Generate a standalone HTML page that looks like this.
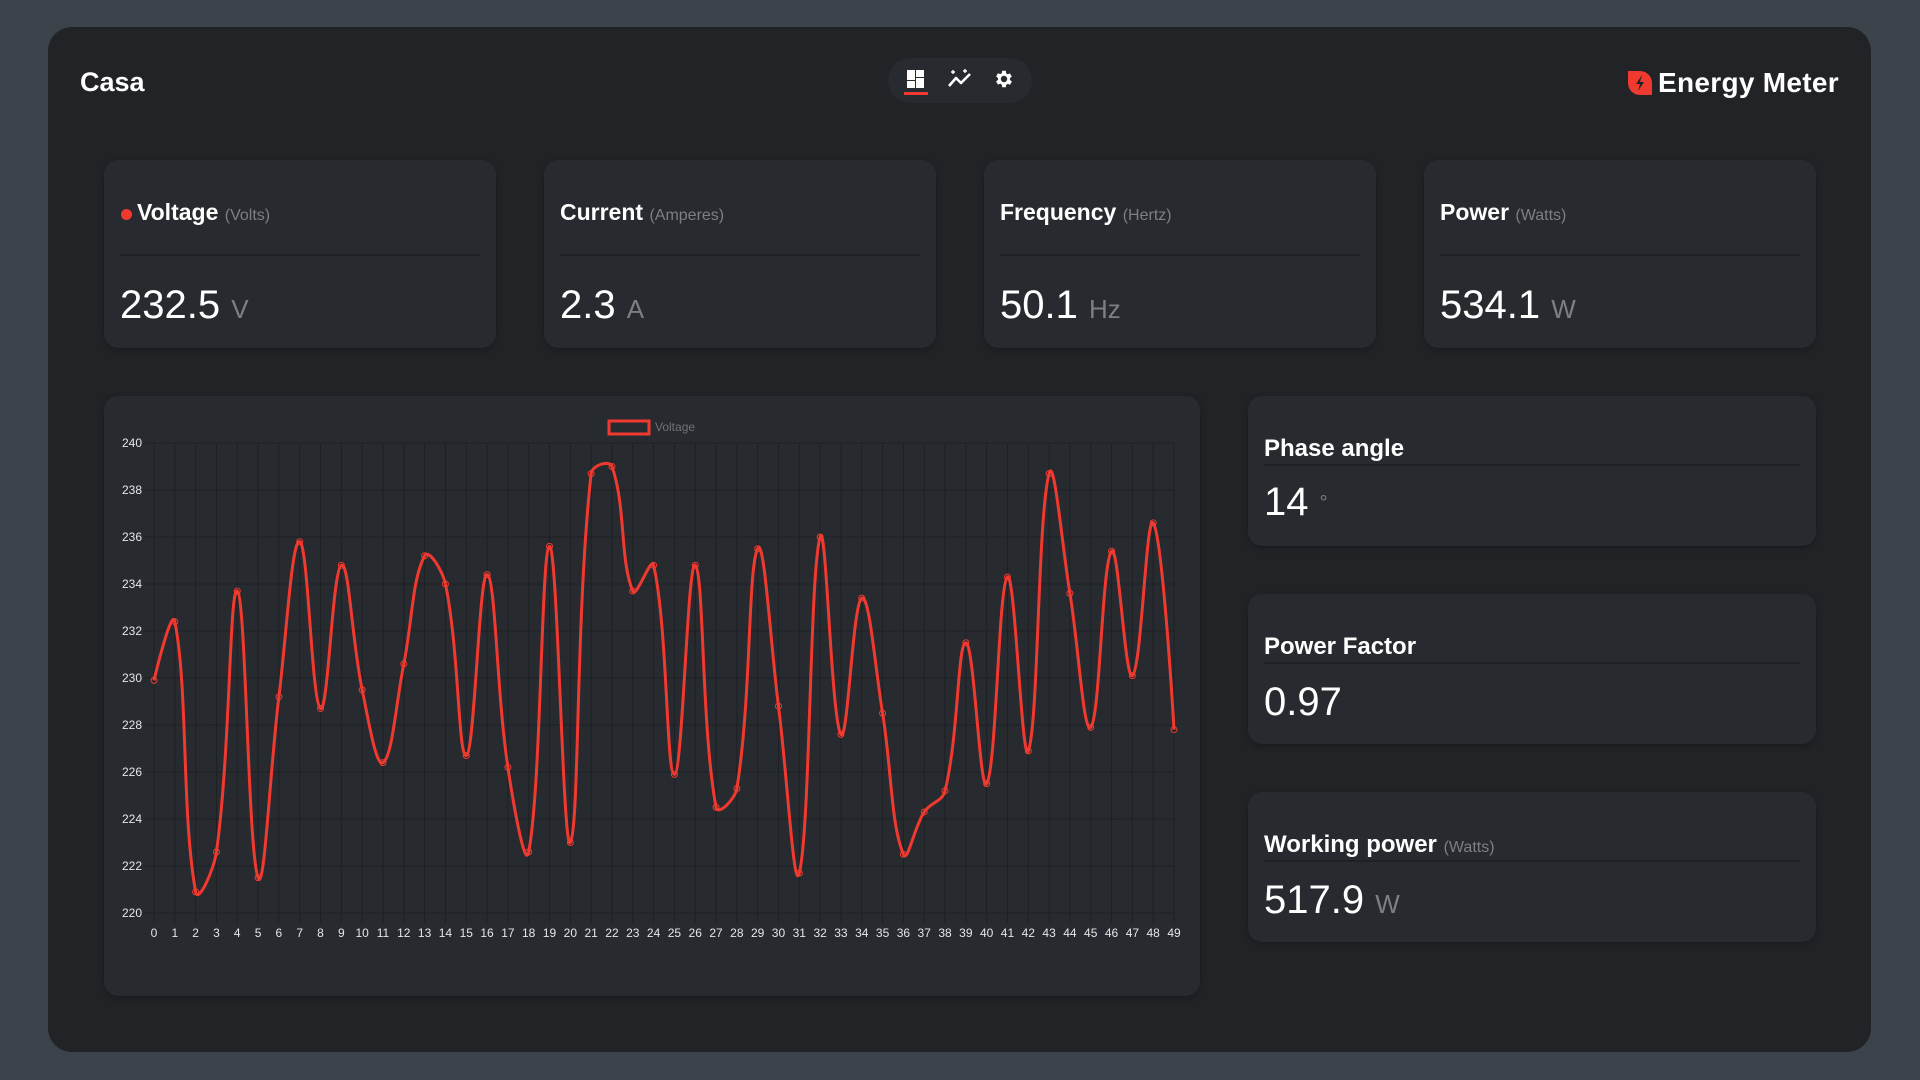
<!DOCTYPE html>
<html><head><meta charset="utf-8"><style>
*{margin:0;padding:0;box-sizing:border-box}
body{width:1920px;height:1080px;background:#3c434b;font-family:"Liberation Sans",sans-serif;position:relative;overflow:hidden;color:#fff}
.abs{position:absolute}
#panel{left:48px;top:27px;width:1823px;height:1025px;background:#212327;border-radius:24px}
.card{position:absolute;background:#272a2f;border-radius:14px;box-shadow:0 2px 6px rgba(0,0,0,.25)}
.t{position:absolute;line-height:1;white-space:nowrap}
.b{font-weight:bold}
.sub{font-weight:normal;color:#7c7f85;font-size:16px}
.unit{color:#7c7f85;font-size:26px}
.div{position:absolute;height:2px;background:#1e2024}
</style></head><body>
<div id="panel" class="abs"></div>
<div class="t b" style="left:80px;top:69px;font-size:27px">Casa</div>
<div class="abs" style="left:888px;top:58px;width:144px;height:45px;border-radius:23px;background:#272a2f"></div>
<svg class="abs" style="left:904px;top:68px" width="24" height="28" viewBox="0 0 24 28">
<rect x="3" y="2" width="8" height="10" fill="#fff"/><rect x="3" y="13" width="8" height="7" fill="#fff"/>
<rect x="12" y="2" width="8" height="7" fill="#fff"/><rect x="12" y="10" width="8" height="10" fill="#fff"/>
<rect x="0" y="24" width="24" height="3" fill="#f03a30"/></svg>
<svg class="abs" style="left:947px;top:68px" width="26" height="22" viewBox="0 0 26 22">
<polyline points="2,18 9,10 14,15 23,6" fill="none" stroke="#fff" stroke-width="2.6" stroke-linejoin="round"/>
<path d="M4 4h4M6 2v4M18 1v4M16 3h4" stroke="#fff" stroke-width="1.4"/></svg>
<svg class="abs" style="left:993px;top:68px" width="22" height="22" viewBox="0 0 24 24">
<path fill="#fff" d="M19.4 13a7.5 7.5 0 0 0 0-2l2.1-1.6-2-3.5-2.5 1a7 7 0 0 0-1.7-1L15 3h-4l-.4 2.7a7 7 0 0 0-1.7 1l-2.5-1-2 3.5L6.5 11a7.5 7.5 0 0 0 0 2l-2.1 1.6 2 3.5 2.5-1a7 7 0 0 0 1.7 1L11 21h4l.4-2.7a7 7 0 0 0 1.7-1l2.5 1 2-3.5zM13 15.5a3.5 3.5 0 1 1 0-7 3.5 3.5 0 0 1 0 7z" transform="translate(-1 0)"/></svg>
<svg class="abs" style="left:1627px;top:70px" width="26" height="26" viewBox="0 0 26 26">
<path d="M13 1h12v12A12 12 0 0 1 13 25H1V13A12 12 0 0 1 13 1z" fill="#f03a30" transform="rotate(180 13 13) scale(-1 1) translate(-26 0)"/>
<path d="M15 5l-6 9h4l-2 7 6-9h-4z" fill="#212327"/></svg>
<div class="t b" style="left:1658px;top:69px;font-size:28px;letter-spacing:0.3px">Energy Meter</div>

<div class="card" style="left:104px;top:160px;width:392px;height:188px"></div>
<div class="card" style="left:544px;top:160px;width:392px;height:188px"></div>
<div class="card" style="left:984px;top:160px;width:392px;height:188px"></div>
<div class="card" style="left:1424px;top:160px;width:392px;height:188px"></div>
<div class="abs" style="left:121px;top:209px;width:11px;height:11px;border-radius:50%;background:#f03a30"></div>
<div class="t b" style="left:137px;top:201px;font-size:23px">Voltage <span class="sub">(Volts)</span></div>
<div class="t b" style="left:560px;top:201px;font-size:23px">Current <span class="sub">(Amperes)</span></div>
<div class="t b" style="left:1000px;top:201px;font-size:23px">Frequency <span class="sub">(Hertz)</span></div>
<div class="t b" style="left:1440px;top:201px;font-size:23px">Power <span class="sub">(Watts)</span></div>
<div class="div" style="left:120px;top:254px;width:360px"></div>
<div class="div" style="left:560px;top:254px;width:360px"></div>
<div class="div" style="left:1000px;top:254px;width:360px"></div>
<div class="div" style="left:1440px;top:254px;width:360px"></div>
<div class="t" style="left:120px;top:285px;font-size:40px">232.5 <span class="unit">V</span></div>
<div class="t" style="left:560px;top:285px;font-size:40px">2.3 <span class="unit">A</span></div>
<div class="t" style="left:1000px;top:285px;font-size:40px">50.1 <span class="unit">Hz</span></div>
<div class="t" style="left:1440px;top:285px;font-size:40px">534.1 <span class="unit">W</span></div>

<div class="card" style="left:104px;top:396px;width:1096px;height:600px"></div>
<svg id="ch" class="abs" style="left:0;top:0" width="1920" height="1080"></svg>

<div class="card" style="left:1248px;top:396px;width:568px;height:150px"></div>
<div class="card" style="left:1248px;top:594px;width:568px;height:150px"></div>
<div class="card" style="left:1248px;top:792px;width:568px;height:150px"></div>
<div class="t b" style="left:1264px;top:437px;font-size:24px">Phase angle</div>
<div class="t b" style="left:1264px;top:635px;font-size:24px">Power Factor</div>
<div class="t b" style="left:1264px;top:833px;font-size:24px">Working power <span class="sub">(Watts)</span></div>
<div class="div" style="left:1264px;top:464px;width:536px"></div>
<div class="div" style="left:1264px;top:662px;width:536px"></div>
<div class="div" style="left:1264px;top:860px;width:536px"></div>
<div class="t" style="left:1264px;top:482px;font-size:40px">14 <span class="unit" style="font-size:20px;vertical-align:6px">°</span></div>
<div class="t" style="left:1264px;top:682px;font-size:40px">0.97</div>
<div class="t" style="left:1264px;top:880px;font-size:40px">517.9 <span class="unit">W</span></div>
<script>
var d=[229.9,232.4,220.9,222.6,233.7,221.5,229.2,235.8,228.7,234.8,229.5,226.4,230.6,235.2,234,226.7,234.4,226.2,222.6,235.6,223,238.7,239,233.7,234.8,225.9,234.8,224.5,225.3,235.5,228.8,221.7,236,227.6,233.4,228.5,222.5,224.3,225.2,231.5,225.5,234.3,226.9,238.7,233.6,227.9,235.4,230.1,236.6,227.8];
var x0=154,x1=1174,st=(x1-x0)/49,yy=function(v){return 443+(240-v)*23.5};
var s='';
for(var i=0;i<=10;i++){var y=443+i*47;s+='<line x1="144" x2="1174" y1="'+y+'" y2="'+y+'" stroke="#1e2024" stroke-width="1"/>';s+='<text x="142" y="'+(y+4)+'" fill="#e6e6e6" font-size="12" text-anchor="end" font-family="Liberation Sans">'+(240-i*2)+'</text>';}
for(i=0;i<50;i++){var x=x0+i*st;s+='<line x1="'+x+'" x2="'+x+'" y1="443" y2="923" stroke="#1e2024" stroke-width="1"/>';s+='<text x="'+x+'" y="937" fill="#e6e6e6" font-size="12" text-anchor="middle" font-family="Liberation Sans">'+i+'</text>';}
var P=d.map(function(v,i){return [x0+i*st,yy(v)]});
function cl(y){return Math.max(443,Math.min(913,y))}
var p='M'+P[0][0]+' '+P[0][1],t=0.4;
for(i=0;i<49;i++){var a=P[Math.max(i-1,0)],b=P[i],c=P[i+1],e=P[Math.min(i+2,49)];
function cp(pr,cu,nx){var d01=Math.hypot(cu[0]-pr[0],cu[1]-pr[1]),d12=Math.hypot(nx[0]-cu[0],nx[1]-cu[1]);var s01=d01/(d01+d12||1),s12=d12/(d01+d12||1);var fa=t*s01,fb=t*s12;return [[cu[0]-fa*(nx[0]-pr[0]),cu[1]-fa*(nx[1]-pr[1])],[cu[0]+fb*(nx[0]-pr[0]),cu[1]+fb*(nx[1]-pr[1])]];}
var cb=cp(a,b,c)[1],cc=cp(b,c,e)[0];
if(i==0)cb=b; if(i==48)cc=c;
p+=' C'+cb[0]+' '+cl(cb[1])+' '+cc[0]+' '+cl(cc[1])+' '+c[0]+' '+c[1];}
s+='<path d="'+p+'" fill="none" stroke="#f03a30" stroke-width="3"/>';
P.forEach(function(q){s+='<circle cx="'+q[0]+'" cy="'+q[1]+'" r="3" fill="none" stroke="#f03a30" stroke-width="1"/>'});
s+='<rect x="609" y="421" width="40" height="13" fill="none" stroke="#f03a30" stroke-width="3"/><text x="655" y="431" fill="#6f7277" font-size="12" font-family="Liberation Sans">Voltage</text>';
document.getElementById('ch').innerHTML=s;
</script>
</body></html>
